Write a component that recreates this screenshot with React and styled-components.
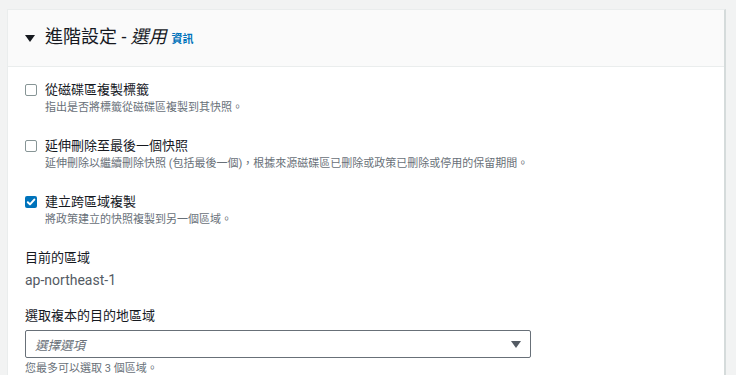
import React from "react";
import styled, { createGlobalStyle } from "styled-components";

const GlobalStyle = createGlobalStyle`
  html, body {
    margin: 0;
    padding: 0;
    background: #f2f3f3;
    font-family: Roboto, "Noto Sans CJK TC", sans-serif;
    color: #16191f;
  }
`;

const Page = styled.div`
  padding: 9px 10px 0 7px;
  height: 375px;
  box-sizing: border-box;
  overflow: hidden;
`;

const Card = styled.section`
  background: #ffffff;
  border-top: 1px solid #eaeded;
  border-left: 1px solid #eaeded;
  border-right: 2px solid #d5dbdb;
  box-sizing: border-box;
  min-height: 380px;
`;

const Header = styled.div`
  height: 56px;
  background: #fafafa;
  border-bottom: 1px solid #eaeded;
  display: flex;
  align-items: center;
  padding: 0 17px;
  gap: 10px;
`;

const Caret = styled.span`
  width: 0;
  height: 0;
  border-left: 5px solid transparent;
  border-right: 5px solid transparent;
  border-top: 7px solid #16191f;
  margin-top: 1px;
`;

const Title = styled.h2`
  margin: 0;
  font-size: 18px;
  font-weight: 400;
  line-height: 22px;
  color: #16191f;

  em {
    font-style: italic;
    margin-left: 4px;
  }
`;

const InfoLink = styled.a`
  font-size: 11px;
  font-weight: 700;
  color: #0073bb;
  text-decoration: none;
  margin-left: 5px;
`;

const Body = styled.div`
  padding: 13px 17px 0 17px;
  display: flex;
  flex-direction: column;
`;

const CheckRow = styled.label`
  display: flex;
  gap: 8px;
  margin-bottom: 20px;
`;

const Box = styled.span`
  flex: none;
  width: 12px;
  height: 12px;
  margin-top: 4px;
  border-radius: 2px;
  box-sizing: border-box;
  border: ${p => (p.$checked ? "none" : "1px solid #879596")};
  background: ${p => (p.$checked ? "#0073bb" : "#ffffff")};
  display: flex;
  align-items: center;
  justify-content: center;
`;

const CheckText = styled.div`
  display: flex;
  flex-direction: column;
`;

const Label = styled.span`
  font-size: 13px;
  line-height: 20px;
  color: #16191f;
`;

const Desc = styled.span`
  font-size: 11px;
  line-height: 16px;
  color: #687078;
`;

const Field = styled.div`
  display: flex;
  flex-direction: column;
  margin-bottom: ${p => p.$gap || "0"};
`;

const FieldLabel = styled.span`
  font-size: 13px;
  line-height: 20px;
  color: #16191f;
`;

const Value = styled.span`
  font-size: 14px;
  line-height: 20px;
  color: #545b64;
  margin-top: 2px;
`;

const Select = styled.div`
  margin-top: 4px;
  width: 506px;
  height: 28px;
  box-sizing: border-box;
  border: 1px solid #687078;
  border-radius: 2px;
  display: flex;
  align-items: center;
  justify-content: space-between;
  padding: 0 9px 0 9px;
`;

const Placeholder = styled.span`
  font-size: 12.5px;
  font-style: italic;
  color: #687078;
`;

const SelectCaret = styled.span`
  width: 0;
  height: 0;
  border-left: 5px solid transparent;
  border-right: 5px solid transparent;
  border-top: 7px solid #545b64;
`;

const Hint = styled.span`
  font-size: 11px;
  line-height: 16px;
  color: #687078;
  margin-top: 3px;
`;

function Check({ checked }) {
  return (
    <Box $checked={checked}>
      {checked && (
        <svg width="10" height="10" viewBox="0 0 10 10">
          <path d="M1.8 5.2 L4 7.4 L8.3 2.6" fill="none" stroke="#fff" strokeWidth="2" strokeLinecap="round" strokeLinejoin="round" />
        </svg>
      )}
    </Box>
  );
}

const options = [
  {
    label: "從磁碟區複製標籤",
    desc: "指出是否將標籤從磁碟區複製到其快照。",
    checked: false,
  },
  {
    label: "延伸刪除至最後一個快照",
    desc: "延伸刪除以繼續刪除快照 (包括最後一個)，根據來源磁碟區已刪除或政策已刪除或停用的保留期間。",
    checked: false,
  },
  {
    label: "建立跨區域複製",
    desc: "將政策建立的快照複製到另一個區域。",
    checked: true,
  },
];

export default function App() {
  return (
    <Page>
      <GlobalStyle />
      <Card>
        <Header>
          <Caret />
          <Title>
            進階設定 -<em>選用</em>
            <InfoLink href="#">資訊</InfoLink>
          </Title>
        </Header>
        <Body>
          {options.map(item => (
            <CheckRow key={item.label}>
              <Check checked={item.checked} />
              <CheckText>
                <Label>{item.label}</Label>
                <Desc>{item.desc}</Desc>
              </CheckText>
            </CheckRow>
          ))}
          <Field $gap="16px">
            <FieldLabel>目前的區域</FieldLabel>
            <Value>ap-northeast-1</Value>
          </Field>
          <Field>
            <FieldLabel>選取複本的目的地區域</FieldLabel>
            <Select>
              <Placeholder>選擇選項</Placeholder>
              <SelectCaret />
            </Select>
            <Hint>您最多可以選取 3 個區域。</Hint>
          </Field>
        </Body>
      </Card>
    </Page>
  );
}
